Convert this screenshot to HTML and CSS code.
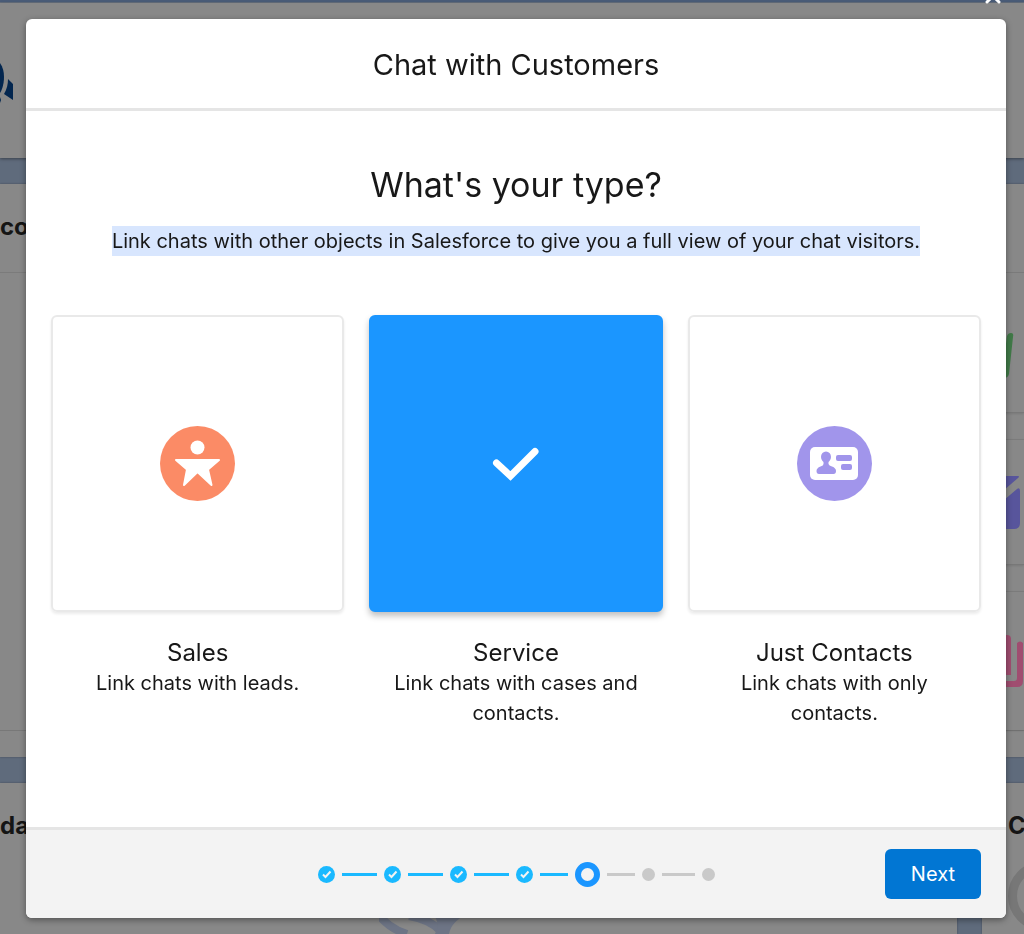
FILE: index.html
```
<!DOCTYPE html>
<html lang="en">
<head>
    <meta charset="UTF-8">
    <meta name="viewport" content="width=device-width, initial-scale=1.0">
    <title>Chat with Customers</title>
    <link rel="stylesheet" href="styles.css">
</head>
<body>
    <!-- dimmed setup page -->
    <div class="page" aria-hidden="true">
        <div class="topbar"></div>
        <div class="hero">
            <svg class="hero-icon" width="14" height="48" viewBox="0 0 14 48">
                <path d="M0 4C3 8 4 13 4 18C4 25 2 31 0 34Z" fill="#03264f"/>
                <path d="M8 20L13 25V41L4 35C7 30 8 25 8 20Z" fill="#03264f"/>
                <path d="M0 38L1 41L0 44Z" fill="#03264f"/>
            </svg>
        </div>
        <div class="panel panel-main">
            <div class="panel-title">co</div>
            <div class="panel-body">
                <div class="feature">
                    <svg width="70" height="46" viewBox="0 0 70 46"><path d="M52 42L57 4Q58 1 61 1Q64 1 63 5L59 42Q58 46 54 46Z" fill="#417a48"/></svg>
                </div>
                <div class="feature">
                    <svg width="70" height="54" viewBox="0 0 70 54">
                        <path d="M2 1H68Q70 1 68 3L39 28Q35 31 31 28L2 3Q0 1 2 1Z" fill="#58559c"/>
                        <path d="M0 15Q0 13 3 15L30 37Q35 41 40 37L67 14Q70 12 70 16V48Q70 54 64 54H6Q0 54 0 48Z" fill="#58559c"/>
                    </svg>
                </div>
                <div class="feature feature-last">
                    <svg width="73" height="52" viewBox="0 0 73 52">
                        <path d="M10 0H57Q61 0 61 4V40H10Z" fill="#a04d70"/>
                        <path d="M67 8Q70 5 73 8V46Q73 52 67 52H10V46H64Q67 46 67 43Z" fill="#a04d70"/>
                    </svg>
                </div>
            </div>
        </div>
        <div class="bottom">
            <div class="panel bottom-main">
                <div class="panel-title">da</div>
                <svg class="sketch" width="140" height="60" viewBox="0 0 140 60">
                    <path d="M-4 36Q8 54 28 60M30 42Q54 46 64 60" fill="none" stroke="#6d7485" stroke-width="8"/>
                    <path d="M54 40H88Q72 48 70 60H56Q62 50 54 40Z" fill="#6d7485"/>
                </svg>
            </div>
            <div class="panel bottom-side">
                <div class="panel-title">C</div>
                <div class="ring"></div>
            </div>
        </div>
    </div>

    <div class="overlay">
        <button class="close" type="button" aria-label="Close">
            <svg width="16" height="16" viewBox="0 0 16 16"><path d="M2 2L14 14M14 2L2 14" stroke="#fff" stroke-width="3" stroke-linecap="round"/></svg>
        </button>
        <form class="modal" role="dialog" aria-labelledby="modal-title">
            <header class="modal-header">
                <h1 id="modal-title">Chat with Customers</h1>
            </header>

            <main class="modal-body">
                <h2>What's your type?</h2>
                <p class="intro"><span class="selected-text">Link chats with other objects in Salesforce to give you a full view of your chat visitors.</span></p>

                <div class="options">
                    <label class="option">
                        <input type="radio" name="type" value="sales">
                        <span class="tile">
                            <svg width="75" height="75" viewBox="0 0 75 75">
                                <circle cx="37.500" cy="37.500" r="37.500" fill="#fb8b66"/>
                                <circle cx="37.500" cy="21.500" r="7" fill="#fff"/>
                                <path d="M16 34H59L48 43.500L51.500 59L37.500 46L24 59L27 43.500Z" fill="#fff" stroke="#fff" stroke-width="2" stroke-linejoin="round"/>
                            </svg>
                        </span>
                        <span class="name">Sales</span>
                        <span class="desc">Link chats with leads.</span>
                    </label>
                    <label class="option">
                        <input type="radio" name="type" value="service" checked>
                        <span class="tile">
                            <svg width="48" height="36" viewBox="0 0 48 36"><path d="M4.500 17L18.500 30L43 5.500" fill="none" stroke="#fff" stroke-width="7" stroke-linecap="round"/></svg>
                        </span>
                        <span class="name">Service</span>
                        <span class="desc">Link chats with cases and contacts.</span>
                    </label>
                    <label class="option">
                        <input type="radio" name="type" value="contacts">
                        <span class="tile">
                            <svg width="75" height="75" viewBox="0 0 75 75">
                                <circle cx="37.500" cy="37.500" r="37.500" fill="#a195eb"/>
                                <rect x="13" y="21" width="48" height="33" rx="5" fill="#fff"/>
                                <ellipse cx="29" cy="31" rx="5" ry="5.500" fill="#a195eb"/>
                                <path d="M26.500 35H31.500V38Q32 39.500 35 40.500Q39 42 39 45Q39 48 36.500 48H22Q19.500 48 19.500 45Q19.500 42 23.500 40.500Q26.500 39.500 26.500 38Z" fill="#a195eb"/>
                                <rect x="39" y="29" width="16" height="6" rx="2" fill="#a195eb"/>
                                <rect x="44" y="38" width="11" height="6" rx="2" fill="#a195eb"/>
                            </svg>
                        </span>
                        <span class="name">Just Contacts</span>
                        <span class="desc">Link chats with only contacts.</span>
                    </label>
                </div>
            </main>

            <footer class="modal-footer">
                <div class="steps" aria-label="Step 5 of 7">
                    <svg class="done" viewBox="0 0 17 17"><circle cx="8.500" cy="8.500" r="8.500"/><path d="M5 8.500L7.500 11L12.500 5.500"/></svg>
                    <span class="line"></span>
                    <svg class="done" viewBox="0 0 17 17"><circle cx="8.500" cy="8.500" r="8.500"/><path d="M5 8.500L7.500 11L12.500 5.500"/></svg>
                    <span class="line"></span>
                    <svg class="done" viewBox="0 0 17 17"><circle cx="8.500" cy="8.500" r="8.500"/><path d="M5 8.500L7.500 11L12.500 5.500"/></svg>
                    <span class="line"></span>
                    <svg class="done" viewBox="0 0 17 17"><circle cx="8.500" cy="8.500" r="8.500"/><path d="M5 8.500L7.500 11L12.500 5.500"/></svg>
                    <span class="line short"></span>
                    <span class="current"></span>
                    <span class="line todo short"></span>
                    <span class="dot"></span>
                    <span class="line todo"></span>
                    <span class="dot"></span>
                </div>
                <button class="next" type="button">Next</button>
            </footer>
        </form>
    </div>
</body>
</html>
```
FILE: styles.css
```
* {
    box-sizing: border-box;
}
body {
    margin: 0;
    font-family: Inter, "Liberation Sans", sans-serif;
    font-size: 20px;
    line-height: 30px;
    color: #181818;
    background-color: #5f6b7c;
}
h1, h2, p {
    margin: 0;
    font-weight: 400;
}

/* page behind the modal */
.page {
    display: flex;
    flex-direction: column;
    height: 100vh;
    overflow: hidden;
}
.topbar {
    flex: none;
    height: 3px;
    background-color: #4a5c78;
    border-bottom: 1px solid #66707e;
}
.hero {
    flex: none;
    height: 155px;
    margin-bottom: 26px;
    padding-top: 56px;
    background-color: #888;
    box-shadow: 0 1px 3px rgba(0, 0, 0, 0.4);
}
.hero-icon {
    display: block;
}
.panel {
    background-color: #888;
    box-shadow: 0 0 2px rgba(0, 0, 0, 0.3);
}
.panel-main {
    padding-bottom: 26px;
}
.panel-title {
    padding: 28px 0 30px;
    font-size: 24px;
    font-weight: 700;
    color: #151515;
}
.panel-body {
    display: flex;
    flex-direction: column;
    gap: 26px;
    align-items: flex-end;
    height: 459px;
    border-top: 1px solid #7b7b7b;
    border-bottom: 1px solid #787878;
}
.feature {
    display: flex;
    flex: none;
    align-items: center;
    width: 120px;
    height: 140px;
    padding-left: 46px;
    padding-top: 24px;
    border-bottom: 1px solid #787878;
    box-shadow: 0 1px 2px rgba(0, 0, 0, 0.1);
}
.feature svg {
    flex: none;
}
.feature + .feature {
    height: 126px;
    padding-top: 0;
    border-top: 1px solid #7b7b7b;
}
.feature + .feature-last {
    height: 139px;
    border-bottom: 0;
}
.bottom {
    display: grid;
    grid-template-columns: 1fr 42px;
    gap: 25px;
    flex: 1;
    margin-top: 26px;
}
.bottom-main {
    display: grid;
    grid-template-columns: 1fr 1fr;
}
.sketch {
    align-self: end;
    margin-left: -100px;
}
.bottom-side .panel-title {
    padding: 28px 0 20px 26px;
}
.ring {
    width: 70px;
    height: 70px;
    margin-left: 26px;
    border: 9px solid #777;
    border-radius: 50%;
}

/* modal */
.overlay {
    position: fixed;
    inset: 0;
    display: flex;
    padding: 19px 18px 16px 26px;
    overflow: hidden;
}
.close {
    position: absolute;
    top: -12px;
    right: 23px;
    padding: 0;
    border: 0;
    background: none;
    line-height: 0;
    cursor: pointer;
}
.modal {
    display: flex;
    flex-direction: column;
    flex: 1;
    overflow: hidden;
    background-color: #fff;
    border-radius: 6px;
    box-shadow: 0 2px 6px rgba(0, 0, 0, 0.4);
}
.modal-header {
    padding: 26px 25px 24px;
    border-bottom: 3px solid #e5e5e5;
    text-align: center;
}
.modal-header h1 {
    font-size: 29px;
    line-height: 39px;
}
.modal-body {
    flex: 1;
    padding: 49px 25px;
    text-align: center;
}
.modal-body h2 {
    font-size: 34px;
    line-height: 50px;
}
.intro {
    margin: 16px 0 59px;
}
.selected-text {
    display: inline-block;
    background-color: #d8e6fe;
}
.options {
    display: grid;
    grid-template-columns: repeat(3, 1fr);
    gap: 25px;
}
.option {
    display: flex;
    flex-direction: column;
    position: relative;
    cursor: pointer;
}
.option input {
    position: absolute;
    opacity: 0;
}
.tile {
    display: flex;
    align-items: center;
    justify-content: center;
    height: 297px;
    margin-bottom: 26px;
    border: 2px solid #e9e9e9;
    border-radius: 6px;
    box-shadow: 0 2px 3px rgba(0, 0, 0, 0.08);
}
.option input:checked + .tile {
    background-color: #1b96ff;
    border-color: #1b96ff;
    box-shadow: 0 4px 6px rgba(0, 0, 0, 0.25);
}
.name {
    font-size: 24px;
}
.desc {
    padding: 0 20px;
}
.modal-footer {
    display: grid;
    grid-template-columns: 1fr auto 1fr;
    align-items: center;
    padding: 19px 25px;
    border-top: 3px solid #e5e5e5;
    background-color: #f3f3f3;
}
.steps {
    display: flex;
    grid-column: 2;
    align-items: center;
    gap: 7px;
}
.done {
    width: 17px;
    height: 17px;
    fill: #1ab9ff;
}
.done path {
    fill: none;
    stroke: #f3f3f3;
    stroke-width: 2;
}
.line {
    width: 35px;
    height: 3px;
    background-color: #1ab9ff;
}
.line.todo {
    width: 33px;
    background-color: #c9c9c9;
}
.line.short {
    width: 28px;
}
.current {
    width: 25px;
    height: 25px;
    border: 6px solid #1b96ff;
    border-radius: 50%;
}
.dot {
    width: 13px;
    height: 13px;
    border-radius: 50%;
    background-color: #c9c9c9;
}
.next {
    justify-self: end;
    height: 50px;
    padding: 0 26px;
    border: 0;
    border-radius: 6px;
    background-color: #0176d3;
    color: #fff;
    font-family: inherit;
    font-size: 20px;
    cursor: pointer;
}
```
